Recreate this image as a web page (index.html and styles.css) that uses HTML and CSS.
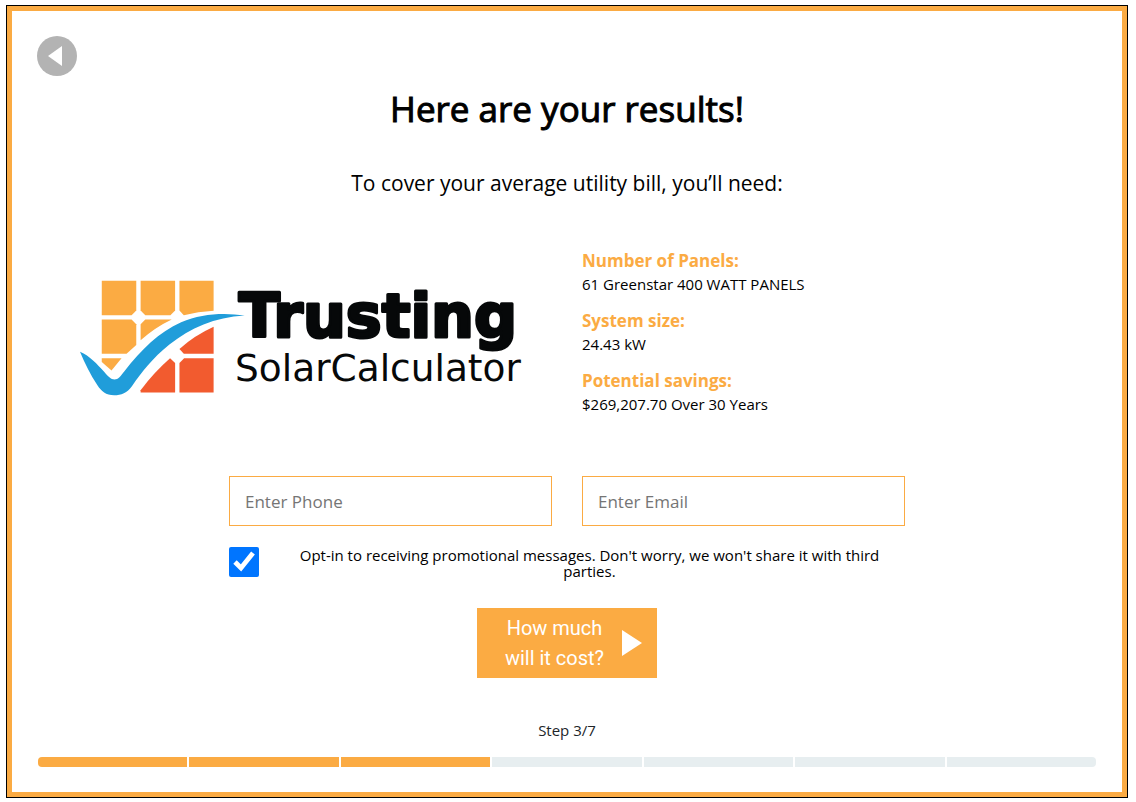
FILE: index.html
```html
<!DOCTYPE html>
<html lang="en">
<head>
<meta charset="utf-8">
<meta name="viewport" content="width=device-width, initial-scale=1">
<title>Solar calculator results</title>
<link rel="stylesheet" href="styles.css">
</head>
<body>
<main class="frame">
  <button class="back" type="button" aria-label="Back">
    <svg viewBox="0 0 40 40" aria-hidden="true"><path d="M11 20 25 10V30Z" fill="#fff"/></svg>
  </button>
  <h1 class="title">Here are your results!</h1>
  <p class="lead">To cover your average utility bill, you’ll need:</p>
  <section class="results">
    <svg class="logo" viewBox="33 45 1329 348" role="img" aria-label="Trusting SolarCalculator">
      <g fill="#fbab43">
        <path d="M98 47H201V136L187 150H98Z"/>
        <path d="M214 47H317V136L303 150H228L214 136Z"/>
        <path d="M330 47H432V137Q385 140 343 150L330 136Z"/>
        <path d="M98 163H187L201 177V239L172 265H98Z"/>
        <path d="M214 177 228 163H307Q258 186 214 225Z"/>
        <path d="M98 279H157L127 315 98 290Z"/>
      </g>
      <g fill="#f25b2f">
        <path d="M432 185V265H343L330 251Q375 211 432 185Z"/>
        <path d="M302 279 317 293V381H214V374Q255 320 302 279Z"/>
        <path d="M330 293 344 279H432V381H330Z"/>
      </g>
      <path fill="#209dda" d="M33 259C63 272 83 295 105 319C117 333 125 342 136 342C147 342 155 331 165 318C215 253 270 200 335 171C395 146 460 142 525 151C435 156 362 188 300 238C248 280 220 318 188 362C174 382 156 389 135 389C110 389 97 377 85 359C63 327 47 292 33 259Z"/>
      <text class="logo-name" x="507" y="216">Trusting</text>
      <text class="logo-sub" x="496" y="347">SolarCalculator</text>
    </svg>
    <dl class="stats">
      <div class="stat"><dt>Number of Panels:</dt><dd>61 Greenstar 400 WATT PANELS</dd></div>
      <div class="stat"><dt>System size:</dt><dd>24.43 kW</dd></div>
      <div class="stat"><dt>Potential savings:</dt><dd>$269,207.70 Over 30 Years</dd></div>
    </dl>
  </section>
  <form class="form">
    <div class="fields">
      <input class="field" type="tel" placeholder="Enter Phone" aria-label="Phone">
      <input class="field" type="email" placeholder="Enter Email" aria-label="Email">
    </div>
    <div class="optin">
      <input class="check" type="checkbox" id="optin" checked>
      <label class="optin-text" for="optin">Opt-in to receiving promotional messages. Don't worry, we won't share it with third parties.</label>
    </div>
    <button class="submit" type="button">
      <span>How much will it cost?</span>
      <svg class="arrow" viewBox="0 0 20 26" aria-hidden="true"><path d="M0 0 20 13 0 26Z" fill="#fff"/></svg>
    </button>
  </form>
  <footer class="steps">
    <p class="step-text">Step 3/7</p>
    <div class="bar">
      <span class="seg done"></span><span class="seg done"></span><span class="seg done"></span><span class="seg"></span><span class="seg"></span><span class="seg"></span><span class="seg"></span>
    </div>
  </footer>
</main>
</body>
</html>
```
FILE: styles.css
```css
* { box-sizing: border-box; }
body {
  margin: 0;
  padding: 5px 8px 4px 6px;
  background: #fff;
  color: #000;
  font-family: "Open Sans", "Noto Sans", sans-serif;
  font-size: 15px;
}
.frame {
  padding: 25px;
  border: 6px solid #fbab43;
  outline: 1px solid #000;
  outline-offset: -1px;
}
.back {
  display: block;
  width: 40px;
  height: 40px;
  padding: 0;
  border: 0;
  border-radius: 50%;
  background: #b3b3b3;
}
.back svg { display: block; }
.title {
  margin: 8px 0 0;
  font-size: 35px;
  font-weight: 500;
  line-height: 50px;
  text-align: center;
  -webkit-text-stroke: 1px #000;
}
.lead {
  margin: 34px 0 0;
  font-size: 21px;
  line-height: 30px;
  text-align: center;
}
.results {
  display: grid;
  grid-template-columns: 1fr 1fr;
  gap: 30px;
  align-items: center;
  margin-top: 51px;
  padding: 0 15px;
}
.logo { display: block; width: 89%; margin: 0 auto; }
.logo-name {
  font-family: "DejaVu Sans", sans-serif;
  font-size: 180px;
  font-weight: 700;
  fill: #060809;
  stroke: #060809;
  stroke-width: 9px;
  stroke-linejoin: round;
}
.logo-sub {
  font-family: "DejaVu Sans", sans-serif;
  font-size: 112px;
  fill: #060809;
}
.stats { margin: 0; padding-bottom: 12px; }
.stat + .stat { margin-top: 14px; }
.stat dt {
  color: #fbab43;
  font-size: 17px;
  font-weight: 700;
  line-height: 24px;
}
.stat dd { margin: 0; font-size: 15px; line-height: 22px; }
.form {
  max-width: 676px;
  margin: 49px auto 0;
}
.fields { display: grid; grid-template-columns: 1fr 1fr; gap: 30px; }
.field {
  width: 100%;
  height: 50px;
  padding: 0 15px;
  border: 1px solid #fbab43;
  background: #fff;
  font: inherit;
  font-size: 17px;
}
.field::placeholder { color: #757575; }
.optin { display: flex; gap: 15px; margin-top: 21px; }
.check { flex: none; width: 30px; height: 30px; margin: 0; accent-color: #0075ff; }
.optin-text { flex: 1; font-size: 15px; line-height: 16px; text-align: center; padding: 0 15px; }
.submit {
  display: flex;
  align-items: center;
  gap: 15px;
  width: 180px;
  height: 70px;
  margin: 29px auto 0;
  padding: 0 15px 0 25px;
  border: 0;
  background: #fbab43;
  color: #fff;
  font-family: Roboto, sans-serif;
  font-size: 20px;
  line-height: 30px;
}
.submit span { width: 105px; }
.arrow { flex: none; width: 20px; height: 26px; }
.step-text {
  margin: 40px 0 0;
  color: #212529;
  font-size: 15px;
  line-height: 24px;
  text-align: center;
}
.bar {
  display: flex;
  gap: 2px;
  height: 10px;
  margin: 15px 1px 0;
  border-radius: 4px;
  overflow: hidden;
}
.seg { flex: 1; background: #e7eef0; }
.done { background: #fbab43; }
```
